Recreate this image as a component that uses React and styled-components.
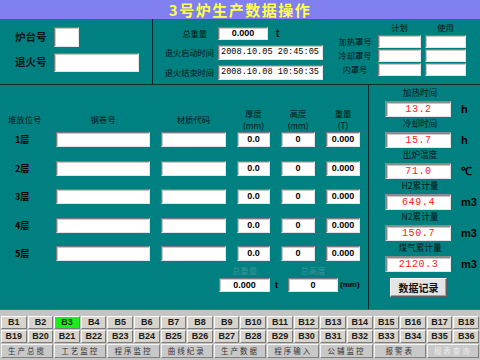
import React from 'react';
import styled, { createGlobalStyle, css } from 'styled-components';

const GlobalStyle = createGlobalStyle`
  *, *::before, *::after { box-sizing: border-box; }
  html, body { margin: 0; padding: 0; }
  body {
    width: 480px;
    height: 360px;
    overflow: hidden;
    font-family: "Noto Sans CJK SC", "Liberation Sans", sans-serif;
  }
`;

const DARK = '#0c2c2c';
const INK = '#031414';

const Screen = styled.div`
  width: 480px;
  height: 360px;
  background: #008080;
  display: flex;
  flex-direction: column;
`;

const TitleBar = styled.div`
  height: 19px;
  background: #8080f0;
  text-align: center;
  color: #ffff48;
  font-size: 15px;
  font-weight: 700;
  letter-spacing: 1.5px;
  line-height: 19px;
`;

const Top = styled.div`
  height: 66px;
  display: flex;
  border-bottom: 1px solid ${DARK};
`;

const TopLeft = styled.div`
  width: 153px;
  border-right: 1px solid ${DARK};
  padding: 8px 0 0 15px;
  display: grid;
  grid-template-columns: 39px auto;
  grid-template-rows: 20px 19px;
  row-gap: 6px;
  align-items: center;
  align-content: start;
`;

const BigLabel = styled.span`
  font-size: 10.5px;
  font-weight: 700;
  color: ${INK};
  line-height: 1;
`;

const Field = styled.div`
  width: ${(p) => p.$w}px;
  height: ${(p) => p.$h || 15}px;
  background: #fff;
  border-top: 1px solid #7c7c7c;
  border-left: 1px solid #7c7c7c;
  border-right: 1px solid #e4e4e4;
  border-bottom: 1px solid #e4e4e4;
  box-shadow: inset 1px 1px 0 #c8c8c8;
  display: flex;
  align-items: center;
  justify-content: ${(p) => (p.$left ? 'flex-start' : 'center')};
  padding-left: ${(p) => (p.$left ? 2 : 0)}px;
  overflow: hidden;
  font-family: "Liberation Sans", sans-serif;
  font-size: 9px;
  font-weight: 700;
  color: #000;
  line-height: 1;
  white-space: nowrap;
  ${(p) =>
    p.$mono &&
    css`
      font-family: "Liberation Mono", monospace;
      font-size: 8.6px;
      font-weight: 400;
    `}
  ${(p) =>
    p.$red &&
    css`
      font-family: "Liberation Mono", monospace;
      font-size: 10px;
      font-weight: 400;
      letter-spacing: 0.6px;
      color: #ff2020;
      border-top: 2px solid #8a8a8a;
      border-left: 2px solid #8a8a8a;
    `}
`;

const TopMid = styled.div`
  flex: 1;
  padding: 8px 0 0 8px;
  display: grid;
  grid-template-columns: 53px auto;
  grid-template-rows: 13px 15px 15px;
  column-gap: 4px;
  row-gap: 5px;
  align-items: center;
  align-content: start;
`;

const SmallLabel = styled.span`
  font-size: 8.2px;
  color: ${INK};
  line-height: 1;
  white-space: nowrap;
  justify-self: ${(p) => p.$justify || 'center'};
  padding-right: ${(p) => p.$pr || 0}px;
`;

const Inline = styled.div`
  display: flex;
  align-items: center;
  gap: ${(p) => p.$gap || 8}px;
`;

const Unit = styled.span`
  font-family: "Liberation Sans", sans-serif;
  font-size: ${(p) => p.$size || 10}px;
  font-weight: 700;
  color: #000;
  line-height: 1;
  padding-left: ${(p) => p.$pl || 0}px;
`;

const TopRight = styled.div`
  width: 130px;
  margin-right: 14px;
  padding-top: 1px;
  display: grid;
  grid-template-columns: 38px 43px 41px;
  grid-template-rows: 14px 13px 13px 13px;
  column-gap: 4px;
  row-gap: 1px;
  align-items: center;
  align-content: start;
`;

const Lower = styled.div`
  height: 224px;
  display: flex;
`;

const TablePanel = styled.div`
  width: 369px;
  border-right: 1px solid ${DARK};
  padding: 22px 0 0 8px;
  display: flex;
  flex-direction: column;
`;

const cols = css`
  display: grid;
  grid-template-columns: 37px 94px 65px 33px 34px 34px;
  column-gap: 11px;
`;

const HeadRow = styled.div`
  ${cols};
  height: 24px;
  margin-bottom: 1px;
  align-items: center;
`;

const HeadCell = styled.div`
  font-size: 8.4px;
  color: ${INK};
  line-height: 12px;
  text-align: ${(p) => (p.$left ? 'left' : 'center')};
  white-space: nowrap;
`;

const Rows = styled.div`
  display: flex;
  flex-direction: column;
  gap: 13.5px;
`;

const Row = styled.div`
  ${cols};
  height: 15px;
  align-items: center;
`;

const RowLabel = styled.span`
  font-size: 9px;
  font-weight: 700;
  color: #000;
  padding-left: 7px;
  line-height: 1;
`;

const Totals = styled.div`
  margin: 3px 0 0 211px;
  display: grid;
  grid-template-columns: 51px 18px 50px auto;
  grid-template-rows: 12px 14px;
  row-gap: 2px;
  align-items: center;
`;

const FadedLabel = styled.span`
  font-size: 8.4px;
  color: #3f9496;
  line-height: 1;
  justify-self: center;
  grid-column: ${(p) => p.$col};
`;

const SidePanel = styled.div`
  flex: 1;
  padding: 1px 0 0 16px;
  display: flex;
  flex-direction: column;
`;

const Gauge = styled.div`
  display: grid;
  grid-template-columns: 66px auto;
  grid-template-rows: 12px 16px;
  row-gap: 3px;
  align-items: center;
`;

const GaugeLabel = styled.span`
  font-size: 8.6px;
  color: ${INK};
  line-height: 1;
  justify-self: center;
  padding-left: 4px;
  white-space: nowrap;
`;

const RecordButton = styled.button`
  margin: 6px 0 0 5px;
  width: 57px;
  height: 19px;
  padding: 0;
  background: #e4e4e4;
  border: 1px solid;
  border-color: #ffffff #606060 #606060 #ffffff;
  box-shadow: inset -1px -1px 0 #a0a0a0;
  font-family: "Noto Sans CJK SC", sans-serif;
  font-size: 10px;
  font-weight: 700;
  color: #101010;
  line-height: 1;
`;

const Nav = styled.div`
  flex: 1;
  background: #c4c4c4;
  border-top: 1px solid #5a6a6a;
  padding: 6px 1px 0 1px;
  display: grid;
  grid-template-columns: repeat(18, 1fr);
  grid-template-rows: 13px 13px 14px;
  gap: 1px;
`;

const NavKey = styled.div`
  background: ${(p) => (p.$active ? '#19f019' : '#d8d4cc')};
  border: 1px solid;
  border-color: #ffffff #7c7c7c #7c7c7c #ffffff;
  display: flex;
  align-items: center;
  justify-content: center;
  font-family: "Liberation Sans", sans-serif;
  font-size: 9px;
  font-weight: 700;
  color: #1a1a1a;
  line-height: 1;
`;

const NavTab = styled.div`
  grid-column: span 2;
  background: #c8c8c8;
  border: 1px solid;
  border-color: #f4f4f4 #808080 #808080 #f4f4f4;
  display: flex;
  align-items: center;
  justify-content: center;
  font-size: 7.5px;
  letter-spacing: 2px;
  color: ${(p) => (p.$disabled ? '#ececec' : '#333')};
  line-height: 1;
`;

const layers = ['1层', '2层', '3层', '4层', '5层'];
const gauges = [
  { label: '加热时间', value: '13.2', unit: 'h' },
  { label: '冷却时间', value: '15.7', unit: 'h' },
  { label: '出炉温度', value: '71.0', unit: '℃' },
  { label: 'H2累计量', value: '649.4', unit: 'm3' },
  { label: 'N2累计量', value: '150.7', unit: 'm3' },
  { label: '煤气累计量', value: '2120.3', unit: 'm3' },
];
const tabs = ['生产总揽', '工艺监控', '程序监控', '曲线纪录', '生产数据', '程序输入', '公辅监控', '报警表', '报表查询'];

export default function App() {
  return (
    <>
      <GlobalStyle />
      <Screen>
        <TitleBar>3号炉生产数据操作</TitleBar>
        <Top>
          <TopLeft>
            <BigLabel>炉台号</BigLabel>
            <Field $w={25} $h={20} />
            <BigLabel>退火号</BigLabel>
            <Field $w={85} $h={19} />
          </TopLeft>
          <TopMid>
            <SmallLabel $justify="end" $pr={7}>总重量</SmallLabel>
            <Inline $gap={8}>
              <Field $w={50} $h={13}>0.000</Field>
              <Unit>t</Unit>
            </Inline>
            <SmallLabel $justify="end">退火启动时间</SmallLabel>
            <Field $w={105} $mono $left>2008.10.05 20:45:05</Field>
            <SmallLabel $justify="end">退火结束时间</SmallLabel>
            <Field $w={105} $mono $left>2008.10.08 10:50:35</Field>
          </TopMid>
          <TopRight>
            <span />
            <SmallLabel>计划</SmallLabel>
            <SmallLabel>使用</SmallLabel>
            {['加热罩号', '冷却罩号', '内罩号'].map((l) => (
              <React.Fragment key={l}>
                <SmallLabel>{l}</SmallLabel>
                <Field $w={43} $h={13} />
                <Field $w={41} $h={13} />
              </React.Fragment>
            ))}
          </TopRight>
        </Top>
        <Lower>
          <TablePanel>
            <HeadRow>
              <HeadCell $left>堆放位号</HeadCell>
              <HeadCell>钢卷号</HeadCell>
              <HeadCell>材质代码</HeadCell>
              <HeadCell>厚度<br />(mm)</HeadCell>
              <HeadCell>高度<br />(mm)</HeadCell>
              <HeadCell>重量<br />(T)</HeadCell>
            </HeadRow>
            <Rows>
              {layers.map((l) => (
                <Row key={l}>
                  <RowLabel>{l}</RowLabel>
                  <Field $w={94} />
                  <Field $w={65} />
                  <Field $w={33}>0.0</Field>
                  <Field $w={34}>0</Field>
                  <Field $w={34}>0.000</Field>
                </Row>
              ))}
            </Rows>
            <Totals>
              <FadedLabel $col={1}>总重量</FadedLabel>
              <FadedLabel $col={3}>总高度</FadedLabel>
              <Field $w={51} $h={14} style={{ gridRow: 2, gridColumn: 1 }}>0.000</Field>
              <Unit $size={9} $pl={5} style={{ gridRow: 2, gridColumn: 2 }}>t</Unit>
              <Field $w={50} $h={14} style={{ gridRow: 2, gridColumn: 3 }}>0</Field>
              <Unit $size={8} $pl={2} style={{ gridRow: 2, gridColumn: 4 }}>(mm)</Unit>
            </Totals>
          </TablePanel>
          <SidePanel>
            {gauges.map((g) => (
              <Gauge key={g.label}>
                <GaugeLabel>{g.label}</GaugeLabel>
                <span />
                <Field $w={66} $h={16} $red>{g.value}</Field>
                <Unit $size={11} $pl={10}>{g.unit}</Unit>
              </Gauge>
            ))}
            <RecordButton>数据记录</RecordButton>
          </SidePanel>
        </Lower>
        <Nav>
          {Array.from({ length: 36 }, (_, i) => (
            <NavKey key={i} $active={i === 2}>B{i + 1}</NavKey>
          ))}
          {tabs.map((t, i) => (
            <NavTab key={t} $disabled={i === tabs.length - 1}>{t}</NavTab>
          ))}
        </Nav>
      </Screen>
    </>
  );
}
